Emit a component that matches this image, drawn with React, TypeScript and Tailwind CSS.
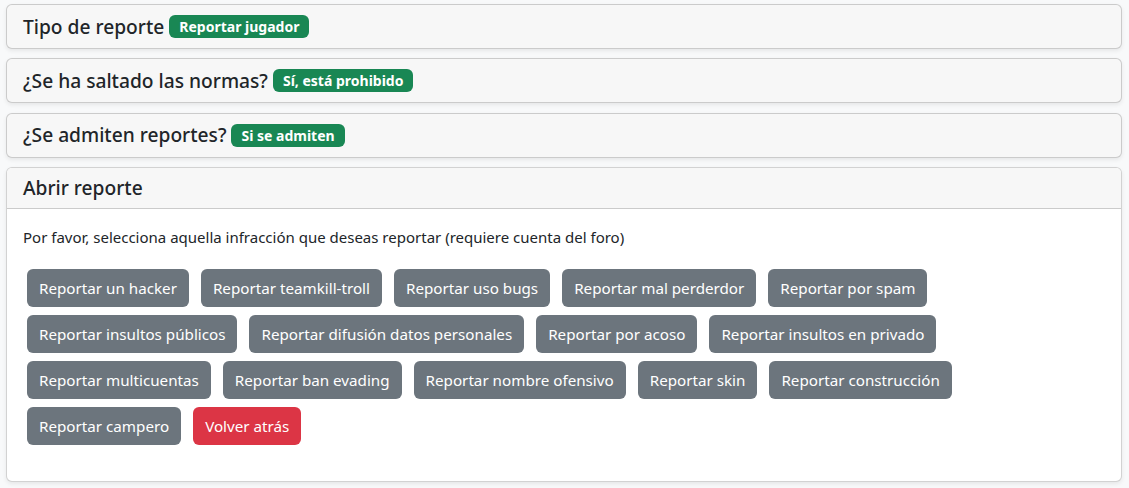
const reportes = [
  'Reportar un hacker',
  'Reportar teamkill-troll',
  'Reportar uso bugs',
  'Reportar mal perderdor',
  'Reportar por spam',
  'Reportar insultos públicos',
  'Reportar difusión datos personales',
  'Reportar por acoso',
  'Reportar insultos en privado',
  'Reportar multicuentas',
  'Reportar ban evading',
  'Reportar nombre ofensivo',
  'Reportar skin',
  'Reportar construcción',
  'Reportar campero',
];

function InfoCard({ title, badge }: { title: string; badge: string }) {
  return (
    <div className="mb-[9.4px] rounded-[6px] border border-black/[0.175] bg-[#f7f7f7] shadow-[0_2px_4px_rgba(0,0,0,0.075)]">
      <div className="flex h-[43px] items-center px-4">
        <h5 className="text-[19.2px] font-medium leading-6 text-[#212529]">{title}</h5>
        <span className="ml-[5px] inline-flex h-[23px] items-center rounded-[6px] bg-[#198754] px-[10px] text-[14px] font-bold text-white">
          {badge}
        </span>
      </div>
    </div>
  );
}

export default function App() {
  return (
    <div
      className="min-h-screen bg-[#f8f9fa] pl-[6px] pr-[7px] pt-[4px] text-[#212529]"
      style={{ fontFamily: '"Noto Sans", "Open Sans", sans-serif' }}
    >
      <InfoCard title="Tipo de reporte" badge="Reportar jugador" />
      <InfoCard title="¿Se ha saltado las normas?" badge="Sí, está prohibido" />
      <InfoCard title="¿Se admiten reportes?" badge="Si se admiten" />

      <div className="overflow-hidden rounded-[6px] border border-black/[0.175] bg-white shadow-[0_2px_4px_rgba(0,0,0,0.075)]">
        <div className="border-b border-black/[0.175] bg-[#f7f7f7] px-4 py-2">
          <h5 className="text-[19.2px] font-medium leading-6">Abrir reporte</h5>
        </div>
        <div className="p-4">
          <p className="mb-4 text-[15px] leading-6">
            Por favor, selecciona aquella infracción que deseas reportar (requiere cuenta del foro)
          </p>
          <div className="mb-4 flex flex-wrap gap-x-[4px] gap-y-0">
            {reportes.map((r) => (
              <button
                key={r}
                className="m-1 h-[38px] rounded-[6px] bg-[#6c757d] px-3 text-[15.2px] leading-6 text-white"
              >
                {r}
              </button>
            ))}
            <button className="m-1 h-[38px] rounded-[6px] bg-[#dc3545] px-3 text-[15.2px] leading-6 text-white">
              Volver atrás
            </button>
          </div>
        </div>
      </div>
    </div>
  );
}
